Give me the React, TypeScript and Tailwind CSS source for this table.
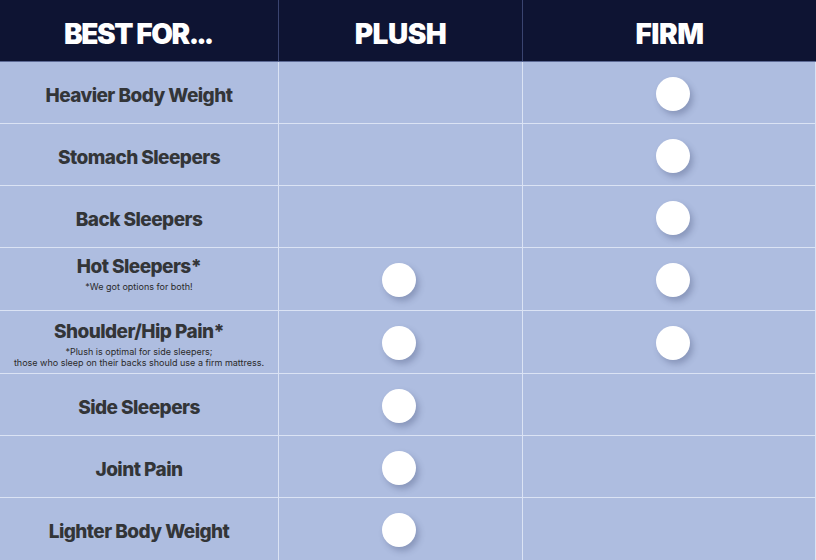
import React from "react";

type Row = { label: string; note?: string[]; plush: boolean; firm: boolean; h: string; shift: string };

const rows: Row[] = [
  { label: "Heavier Body Weight", plush: false, firm: true, h: "h-[62px]", shift: "pt-[6px]" },
  { label: "Stomach Sleepers", plush: false, firm: true, h: "h-[62px]", shift: "pt-[6px]" },
  { label: "Back Sleepers", plush: false, firm: true, h: "h-[62px]", shift: "pt-[6px]" },
  {
    label: "Hot Sleepers*",
    note: ["*We got options for both!"],
    plush: true,
    firm: true,
    h: "h-[63px]",
    shift: "pb-[10px]",
  },
  {
    label: "Shoulder/Hip Pain*",
    note: ["*Plush is optimal for side sleepers;", "those who sleep on their backs should use a firm mattress."],
    plush: true,
    firm: true,
    h: "h-[63px]",
    shift: "pt-[5px]",
  },
  { label: "Side Sleepers", plush: true, firm: false, h: "h-[62px]", shift: "pt-[6px]" },
  { label: "Joint Pain", plush: true, firm: false, h: "h-[62px]", shift: "pt-[6px]" },
  { label: "Lighter Body Weight", plush: true, firm: false, h: "h-[63px]", shift: "pt-[6px]" },
];

function Dot() {
  return <div className="w-[34px] h-[34px] rounded-full bg-white shadow-[3px_4px_6px_rgba(40,50,90,0.28)]" />;
}

export default function App() {
  return (
    <div
      className="w-[816px] h-[560px] overflow-hidden bg-[#aebde0]"
      style={{ fontFamily: "Inter, 'Liberation Sans', sans-serif" }}
    >
      <div className="grid grid-cols-[279px_244px_293px] h-[62px] bg-[#0e1433] border-b border-[#5d6a95]">
        <div className="flex items-center justify-center pt-[6px] border-r border-[#3a4470] text-white font-black text-[28px] tracking-[-1.4px]">
          BEST FOR<span className="tracking-[-3px] pr-[3px]">...</span>
        </div>
        <div className="flex items-center justify-center pt-[6px] border-r border-[#3a4470] text-white font-black text-[28px] tracking-[-0.5px]">
          PLUSH
        </div>
        <div className="flex items-center justify-center pt-[6px] text-white font-black text-[28px] tracking-[-0.5px]">
          FIRM
        </div>
      </div>
      {rows.map((r) => (
        <div key={r.label} className={`grid grid-cols-[279px_244px_293px] ${r.h}`}>
          <div
            className={`flex flex-col items-center justify-center border-r border-b border-[#dbe3f4] text-[#333538] ${r.shift}`}
          >
            <div className="font-extrabold text-[19px] leading-[22px] tracking-[-0.55px]">{r.label}</div>
            {r.note && (
              <div className="mt-[3px] text-[9px] leading-[11px] text-center text-[#2a2a2a]">
                {r.note.map((n) => (
                  <div key={n}>{n}</div>
                ))}
              </div>
            )}
          </div>
          <div className="flex items-center justify-center pt-[2px] pr-[4px] border-r border-b border-[#dbe3f4]">
            {r.plush && <Dot />}
          </div>
          <div className="flex items-center justify-center pt-[2px] pl-[8px] border-r border-b border-[#dbe3f4]">
            {r.firm && <Dot />}
          </div>
        </div>
      ))}
    </div>
  );
}
